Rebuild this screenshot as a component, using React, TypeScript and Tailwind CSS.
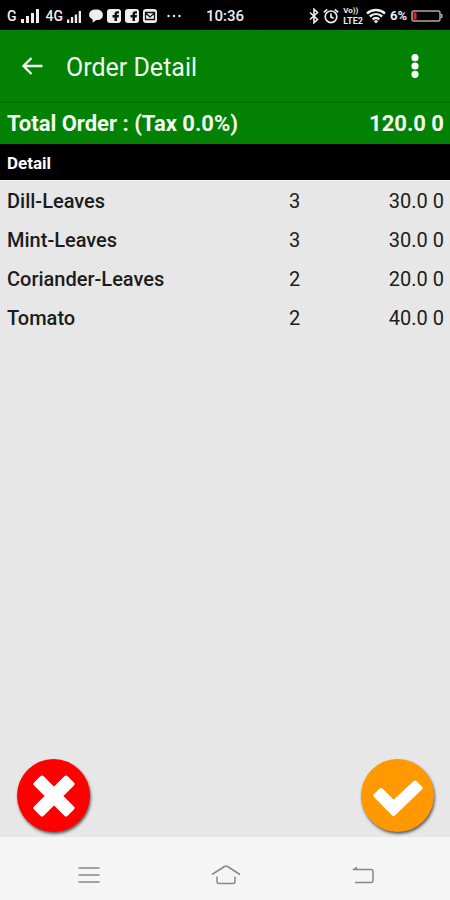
import { useState } from 'react';

interface OrderItem {
  name: string;
  quantity: number;
  price: string;
}

const ORDER_ITEMS: OrderItem[] = [
  { name: 'Dill-Leaves', quantity: 3, price: '30.0 0' },
  { name: 'Mint-Leaves', quantity: 3, price: '30.0 0' },
  { name: 'Coriander-Leaves', quantity: 2, price: '20.0 0' },
  { name: 'Tomato', quantity: 2, price: '40.0 0' },
];

function SignalBars({ className }: { className: string }) {
  return (
    <svg className={className} viewBox="0 0 18 14" preserveAspectRatio="none" fill="currentColor">
      <path d="M0 10h3v4H0zM5 7h3v7H5zM10 4h3v10h-3zM15 0h3v14h-3z" />
    </svg>
  );
}

function FacebookIcon() {
  return (
    <svg className="w-3.5 h-3.5" viewBox="0 0 14 14">
      <rect width="14" height="14" rx="3" fill="#eee" />
      <path d="M7.500 12V8.500H5.500V6h2V4.800C7.500 3 8.500 2.200 10 2.200h2v2.200h-1c-.8 0-1 .3-1 .8V6h2l-.3 2.500H10V12z" fill="#111" />
    </svg>
  );
}

function StatusBar() {
  return (
    <div className="h-[30px] shrink-0 grid grid-cols-[1fr_auto_1fr] items-center bg-black px-[7px] text-[#eee] text-[15px] leading-4 font-medium">
      <div className="flex items-center pt-0.5">
        <span className="text-sm leading-4">G</span>
        <SignalBars className="w-[18px] h-[14px] ml-1" />
        <span className="ml-[7px] text-sm leading-4">4G</span>
        <SignalBars className="w-[14px] h-3 ml-1 mt-0.5" />
        <div className="flex items-center gap-1 ml-2">
          <svg className="w-3.5 h-3.5" viewBox="0 0 14 14" fill="#eee">
            <path d="M7 .5c4.200 0 6.900 2 6.900 5.500S11.200 11.200 7 11.200l-3.500 2.600.2-3.400C1.500 9.400.1 8 .1 6 .1 2.500 2.800.5 7 .5z" />
          </svg>
          <FacebookIcon />
          <FacebookIcon />
          <svg className="w-3.5 h-3.5" viewBox="0 0 14 14">
            <rect width="14" height="14" rx="3" fill="#eee" />
            <path d="M2.500 3.500h9v7h-9zM2.500 4l4.500 4 4.500-4" fill="none" stroke="#111" strokeWidth="1.300" />
          </svg>
        </div>
        <svg className="w-3.5 h-1 ml-2.5" viewBox="0 0 14 4" fill="currentColor">
          <circle cx="1.500" cy="2" r="1.200" />
          <circle cx="7" cy="2" r="1.200" />
          <circle cx="12.500" cy="2" r="1.200" />
        </svg>
      </div>
      <time className="pt-0.5">10:36</time>
      <div className="flex items-center justify-end pt-0.5">
        <svg className="w-2.5 h-4" viewBox="0 0 10 16" fill="none" stroke="currentColor" strokeWidth="1.600">
          <path d="M1 4.500l7.500 7L5 14.800V1.200l3.500 3.300-7.500 7" />
        </svg>
        <svg className="w-4 h-4 ml-1" viewBox="0 0 16 16" fill="none" stroke="currentColor" strokeWidth="1.700">
          <circle cx="8" cy="8.800" r="5.800" />
          <path d="M8 5.500v3.600l2.600 1.200M.8 4.300l3.400-3M15.200 4.300l-3.400-3" />
        </svg>
        <span className="ml-1 flex flex-col text-[9px] leading-[10px] font-bold">
          <span className="text-[8px]">Vo))</span>
          <span>LTE2</span>
        </span>
        <svg className="w-5 h-4 ml-[3px]" viewBox="0 0 20 16" fill="none" stroke="currentColor" strokeWidth="2.400">
          <path d="M1 5.500c5.200-4.600 12.800-4.600 18 0M3.800 8.500c3.700-3.200 8.700-3.200 12.400 0M6.600 11.400c2.100-1.700 4.700-1.700 6.800 0" />
          <path d="M10 15.500l-2.300-2.600c1.400-1 3.200-1 4.600 0z" fill="currentColor" stroke="none" />
        </svg>
        <span className="ml-1 text-[13px] font-bold">6%</span>
        <svg className="w-8 h-3 ml-1" viewBox="0 0 32 12">
          <rect x="1" y="1" width="28" height="10" rx="2" fill="none" stroke="#aaa" strokeWidth="1.500" />
          <path d="M30 4h1.500v4H30z" fill="#aaa" />
          <path d="M2.500 2.500h3v7h-3z" fill="#e8281e" />
        </svg>
      </div>
    </div>
  );
}

function NavigationBar() {
  return (
    <nav className="h-[63px] shrink-0 grid grid-cols-3 items-center bg-[#f5f5f5] pl-5 pr-[18px] pt-3 text-[#888]">
      <button type="button" aria-label="Recent apps" className="flex justify-center">
        <svg className="w-[22px] h-[18px]" viewBox="0 0 22 18" fill="none" stroke="currentColor" strokeWidth="1.500">
          <path d="M.5 2h21M.5 9h21M.5 16h21" />
        </svg>
      </button>
      <button type="button" aria-label="Home" className="flex justify-center">
        <svg className="w-[30px] h-5" viewBox="0 0 30 20" fill="none" stroke="currentColor" strokeWidth="1.500" strokeLinejoin="round">
          <path d="M1 9.500L13.500 1.500Q15 .7 16.500 1.500L29 9.500M6 11.500v5q0 2 2 2h14q2 0 2-2v-5" />
        </svg>
      </button>
      <button type="button" aria-label="Back" className="flex justify-center">
        <svg className="w-[22px] h-[18px]" viewBox="0 0 22 18" fill="none" stroke="currentColor" strokeWidth="1.500">
          <path d="M1 3.500h18q2 0 2 2v9q0 2-2 2H3" />
          <path d="M0 4L5 .5v3.500z" fill="currentColor" stroke="none" />
        </svg>
      </button>
    </nav>
  );
}

export default function App() {
  const [items] = useState<OrderItem[]>(ORDER_ITEMS);

  return (
    <div className="min-h-screen flex flex-col bg-[#e7e7e7] font-[Roboto,sans-serif] text-[#1c1c1c]">
      <StatusBar />

      <header className="h-[73px] shrink-0 flex items-center bg-[#028102] border-b-2 border-[#026e02] px-[21px] text-[#f0faf0]">
        <button type="button" aria-label="Back">
          <svg className="w-[23px] h-5" viewBox="0 0 23 20" fill="none" stroke="currentColor" strokeWidth="2.400">
            <path d="M21.500 10H2.500M10.500 2L2.500 10l8 8" />
          </svg>
        </button>
        <h1 className="flex-1 ml-[22px] pt-1 text-[25px] leading-8">Order Detail</h1>
        <button type="button" aria-label="More options" className="px-2.5">
          <svg className="w-2 h-6" viewBox="0 0 8 24" fill="#fff">
            <circle cx="4" cy="3.700" r="3.600" />
            <circle cx="4" cy="12" r="3.600" />
            <circle cx="4" cy="20.300" r="3.600" />
          </svg>
        </button>
      </header>

      <main className="flex-1 flex flex-col">
        <div className="h-[41px] flex items-center justify-between bg-[#028102] pl-[7px] pr-1.5 text-[22px] leading-7 font-bold text-[#f4fcf4]">
          <span>Total Order : (Tax 0.0%)</span>
          <span>120.0 0</span>
        </div>
        <h2 className="h-9 flex items-center bg-black px-[7px] pt-0.5 text-[17px] leading-6 font-bold text-white">Detail</h2>

        <table className="w-full table-fixed border-t border-[#f4f4f4] text-xl">
          <tbody>
            {items.map((item) => (
              <tr key={item.name} className="h-[39px]">
                <th scope="row" className="w-3/5 pt-0.5 pl-[7px] text-left font-medium">{item.name}</th>
                <td className="pt-0.5 pl-[19px]">{item.quantity}</td>
                <td className="pt-0.5 pr-1.5 text-right">{item.price}</td>
              </tr>
            ))}
          </tbody>
        </table>

        <div className="mt-auto flex justify-between pl-[17px] pr-4 pb-[5px]">
          <button
            type="button"
            aria-label="Reject order"
            className="w-[73px] h-[73px] flex items-center justify-center rounded-full bg-[#fe0000] shadow-[1px_2px_3px_rgba(0,0,0,0.6)]"
          >
            <svg className="w-[42px] h-[42px]" viewBox="0 0 42 42" stroke="#fff" fill="#fff" strokeWidth="4" strokeLinejoin="round">
              <path d="M9 2.500L21 14.500 33 2.500 39.500 9 27.500 21 39.500 33 33 39.500 21 27.500 9 39.500 2.500 33 14.500 21 2.500 9z" />
            </svg>
          </button>
          <button
            type="button"
            aria-label="Accept order"
            className="w-[73px] h-[73px] flex items-center justify-center rounded-full bg-[#ff9801] shadow-[1px_2px_3px_rgba(0,0,0,0.6)]"
          >
            <svg className="w-[50px] h-9 mt-1" viewBox="0 0 50 36" stroke="#fff" fill="#fff" strokeWidth="4" strokeLinejoin="round">
              <path d="M2.500 15.500L8 10 20.500 22.500 42 2.500 47.500 8 20.500 34z" />
            </svg>
          </button>
        </div>
      </main>

      <NavigationBar />
    </div>
  );
}
